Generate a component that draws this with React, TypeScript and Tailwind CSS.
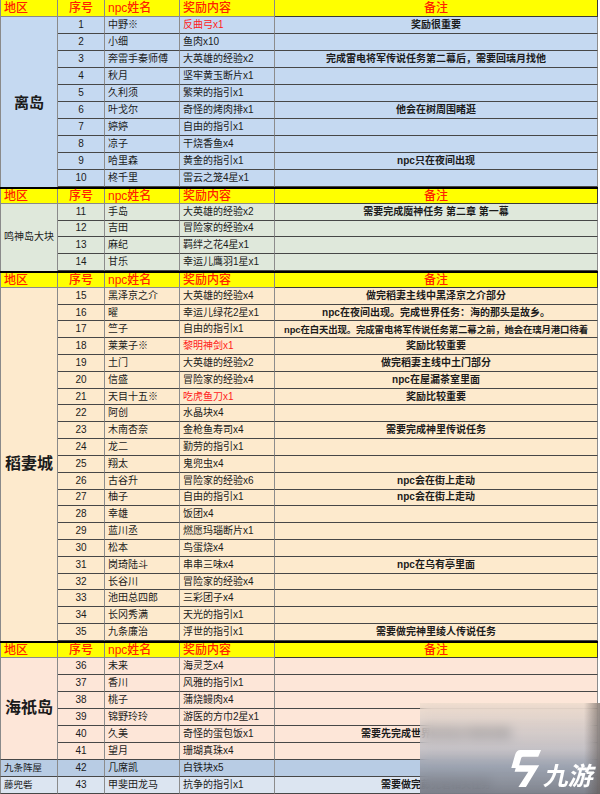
import React from "react";

type Row = { n: number; name: string; reward: string; red?: boolean; note?: string; small?: boolean };

const FONT = { fontFamily: "'Liberation Sans', 'Noto Sans CJK SC', sans-serif" };

const sec1: Row[] = [
  { n: 1, name: "中野※", reward: "反曲弓x1", red: true, note: "奖励很重要" },
  { n: 2, name: "小细", reward: "鱼肉x10" },
  { n: 3, name: "奔雷手秦师傅", reward: "大英雄的经验x2", note: "完成雷电将军传说任务第二幕后，需要回璃月找他" },
  { n: 4, name: "秋月", reward: "坚牢黄玉断片x1" },
  { n: 5, name: "久利须", reward: "繁荣的指引x1" },
  { n: 6, name: "叶戈尔", reward: "奇怪的烤肉排x1", note: "他会在树周围睹逛" },
  { n: 7, name: "婷婷", reward: "自由的指引x1" },
  { n: 8, name: "凉子", reward: "干烧香鱼x4" },
  { n: 9, name: "哈里森", reward: "黄金的指引x1", note: "npc只在夜间出现" },
  { n: 10, name: "柊千里", reward: "雷云之笼4星x1" },
];

const sec2: Row[] = [
  { n: 11, name: "手岛", reward: "大英雄的经验x2", note: "需要完成魔神任务 第二章 第一幕" },
  { n: 12, name: "吉田", reward: "冒险家的经验x4" },
  { n: 13, name: "麻纪", reward: "羁绊之花4星x1" },
  { n: 14, name: "甘乐", reward: "幸运儿鹰羽1星x1" },
];

const sec3: Row[] = [
  { n: 15, name: "黑泽京之介", reward: "大英雄的经验x4", note: "做完稻妻主线中黑泽京之介部分" },
  { n: 16, name: "曜", reward: "幸运儿绿花2星x1", note: "npc在夜间出现。完成世界任务：海的那头是故乡。" },
  { n: 17, name: "竺子", reward: "自由的指引x1", note: "npc在白天出现。完成雷电将军传说任务第二幕之前，她会在璃月港口待着", small: true },
  { n: 18, name: "莱莱子※", reward: "黎明神剑x1", red: true, note: "奖励比较重要" },
  { n: 19, name: "土门", reward: "大英雄的经验x2", note: "做完稻妻主线中土门部分" },
  { n: 20, name: "信盛", reward: "冒险家的经验x4", note: "npc在屋漏茶室里面" },
  { n: 21, name: "天目十五※", reward: "吃虎鱼刀x1", red: true, note: "奖励比较重要" },
  { n: 22, name: "阿创", reward: "水晶块x4" },
  { n: 23, name: "木南杏奈", reward: "金枪鱼寿司x4", note: "需要完成神里传说任务" },
  { n: 24, name: "龙二", reward: "勤劳的指引x1" },
  { n: 25, name: "翔太", reward: "鬼兜虫x4" },
  { n: 26, name: "古谷升", reward: "冒险家的经验x6", note: "npc会在街上走动" },
  { n: 27, name: "柚子", reward: "自由的指引x1", note: "npc会在街上走动" },
  { n: 28, name: "幸雄", reward: "饭团x4" },
  { n: 29, name: "蓝川丞", reward: "燃愿玛瑙断片x1" },
  { n: 30, name: "松本", reward: "鸟蛋烧x4" },
  { n: 31, name: "岗琦陆斗", reward: "串串三味x4", note: "npc在乌有亭里面" },
  { n: 32, name: "长谷川", reward: "冒险家的经验x4" },
  { n: 33, name: "池田总四郎", reward: "三彩团子x4" },
  { n: 34, name: "长冈秀满", reward: "天光的指引x1" },
  { n: 35, name: "九条廉治", reward: "浮世的指引x1", note: "需要做完神里绫人传说任务" },
];

const sec4: Row[] = [
  { n: 36, name: "未来", reward: "海灵芝x4" },
  { n: 37, name: "香川", reward: "风雅的指引x1" },
  { n: 38, name: "桃子", reward: "蒲烧鳗肉x4" },
  { n: 39, name: "锦野玲玲", reward: "游医的方巾2星x1" },
  { n: 40, name: "久美", reward: "奇怪的蛋包饭x1", note: "需要先完成世界任务后才能找到她" },
  { n: 41, name: "望月", reward: "珊瑚真珠x4" },
];

const GRID = "grid grid-cols-[58px_47px_75px_95px_323px]";

function Header({ first, h }: { first?: boolean; h: string }) {
  return (
    <div
      className={`${GRID} ${h} bg-[#ffff00] text-[#ff2200] text-[12px] font-medium leading-none ${
        first ? "" : "border-t-2 border-black"
      }`}
    >
      <div className="flex items-center pl-[3px] border-l border-r border-b border-[#8a8a8a]">地区</div>
      <div className="flex items-center justify-center border-r border-b border-[#8a8a8a]">序号</div>
      <div className="flex items-center pl-[3px] border-r border-b border-[#8a8a8a]">npc姓名</div>
      <div className="flex items-center pl-[3px] border-r border-b border-[#8a8a8a]">奖励内容</div>
      <div className="flex items-center justify-center border-r border-b border-[#3a3a3a]">备注</div>
    </div>
  );
}

function Cells({ r, bg }: { r: Row; bg: string }) {
  const base = `flex items-center border-r border-b border-r-[#8c8c8c] border-b-[#474747] ${bg}`;
  return (
    <>
      <div className={`${base} justify-center`}>{r.n}</div>
      <div className={`${base} pl-[3px] whitespace-nowrap overflow-hidden`}>{r.name}</div>
      <div className={`${base} pl-[3px] whitespace-nowrap overflow-hidden ${r.red ? "text-[#ff1a1a]" : ""}`}>
        {r.reward}
      </div>
      <div
        className={`${base} justify-center whitespace-nowrap overflow-hidden font-semibold border-r-[#3a3a3a] ${
          r.small ? "text-[9.4px] tracking-[-0.1px]" : "text-[10px]"
        }`}
      >
        {r.note ?? ""}
      </div>
    </>
  );
}

function Logo() {
  return (
    <svg width="34" height="38" viewBox="0 0 36 40" className="shrink-0">
      <path d="M13 1 L35 1 L32 8 L16 8 Q14.5 8 14 9.5 L11 20 L3.5 20 L7.5 6 Q9 1 13 1 Z" fill="white" />
      <path d="M9 17 L33 17 L19 40 L11 40 L21.5 24 L7 24 Z" fill="white" />
    </svg>
  );
}

export default function App() {
  return (
    <div className="relative w-[600px] h-[794px] overflow-hidden bg-white text-[#1b1b1b] text-[10px]" style={FONT}>
      <div className="w-[598px]">
        <Header first h="h-[17px]" />
        <div className={`${GRID} auto-rows-[17px] leading-none`}>
          <div className="row-span-10 flex items-center justify-center bg-[#c5d9f1] border-l border-r border-[#8a8a8a] text-[15px] font-bold">
            离岛
          </div>
          {sec1.map((r) => (
            <Cells key={r.n} r={r} bg="bg-[#c5d9f1]" />
          ))}
        </div>

        <Header h="h-[16.8px]" />
        <div className={`${GRID} auto-rows-[16.8px] leading-none`}>
          <div className="row-span-4 flex items-center justify-center bg-[#dfe8db] border-l border-r border-[#8a8a8a] text-[10px]">
            鸣神岛大块
          </div>
          {sec2.map((r) => (
            <Cells key={r.n} r={r} bg="bg-[#dfe8db]" />
          ))}
        </div>

        <Header h="h-[16.8px]" />
        <div className={`${GRID} auto-rows-[16.82px] leading-none`}>
          <div className="row-span-21 flex items-center justify-center bg-[#fdeacd] border-l border-r border-[#8a8a8a] text-[16px] font-bold">
            稻妻城
          </div>
          {sec3.map((r) => (
            <Cells key={r.n} r={r} bg="bg-[#fdeacd]" />
          ))}
        </div>

        <Header h="h-[17px]" />
        <div className={`${GRID} auto-rows-[17px] leading-none`}>
          <div className="row-span-6 flex items-center justify-center bg-[#fde6d8] border-l border-r border-b border-[#8a8a8a] border-b-[#474747] text-[16px] font-bold">
            海祇岛
          </div>
          {sec4.map((r) => (
            <Cells key={r.n} r={r} bg="bg-[#fde6d8]" />
          ))}
          <div className="flex items-center pl-[3px] bg-[#b8cce4] border-l border-r border-b border-[#8a8a8a] border-b-[#474747] text-[9.5px] whitespace-nowrap">
            九条阵屋
          </div>
          <Cells r={{ n: 42, name: "几席凯", reward: "白铁块x5" }} bg="bg-[#b8cce4]" />
          <div className="flex items-center pl-[3px] bg-[#dce5f1] border-l border-r border-b border-[#8a8a8a] border-b-[#474747] text-[9.5px] whitespace-nowrap">
            藤兜砦
          </div>
          <Cells r={{ n: 43, name: "甲斐田龙马", reward: "抗争的指引x1", note: "需要做完藤兜砦相关任务" }} bg="bg-[#dce5f1]" />
        </div>
      </div>

      {/* Watermark overlay */}
      <div className="absolute left-[420px] top-[703px] w-[180px] h-[91px] backdrop-blur-[6px] bg-gradient-to-b from-[rgba(236,220,205,0.55)] via-[rgba(178,182,194,0.7)] to-[rgba(118,122,132,0.92)]">
        <div className="absolute right-0 top-0 h-full w-[16px] bg-gradient-to-r from-transparent to-[rgba(90,80,75,0.6)]" />
        <div className="absolute left-[88px] top-[46px] flex items-end gap-[3px] whitespace-nowrap">
          <Logo />
          <span
            className="inline-block -skew-x-12 text-white text-[25px] font-bold leading-none whitespace-nowrap"
            style={{ fontFamily: "'Noto Sans CJK SC', sans-serif" }}
          >
            九游
          </span>
        </div>
      </div>
    </div>
  );
}
